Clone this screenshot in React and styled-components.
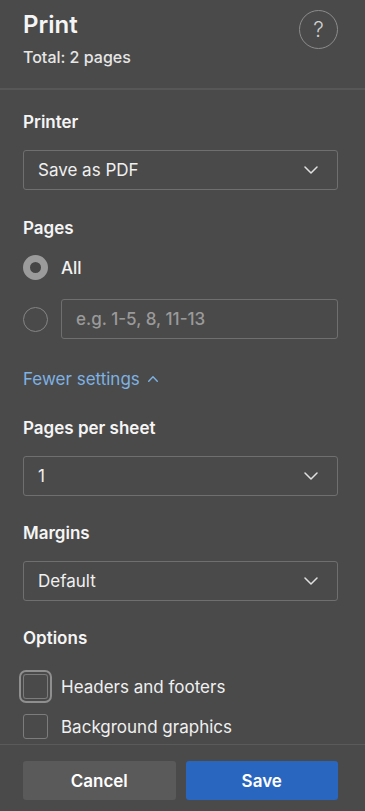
import React from 'react';
import styled, { createGlobalStyle } from 'styled-components';

const GlobalStyle = createGlobalStyle`
  html, body {
    margin: 0;
    padding: 0;
    background: #4a4a4a;
  }
  * {
    box-sizing: border-box;
  }
`;

const Panel = styled.div`
  display: flex;
  flex-direction: column;
  height: 811px;
  width: 365px;
  background: #4a4a4a;
  color: #f2f2f2;
  font-family: Inter, 'Noto Sans', 'Liberation Sans', sans-serif;
`;

const Header = styled.header`
  display: flex;
  justify-content: space-between;
  align-items: flex-start;
  height: 90px;
  padding: 9px 27px 0 23px;
  border-bottom: 2px solid #575757;
`;

const Title = styled.h1`
  margin: 0;
  font-size: 24px;
  line-height: 32px;
  font-weight: 600;
  color: #f5f5f5;
`;

const Subtitle = styled.div`
  margin-top: 6px;
  font-size: 16px;
  line-height: 20px;
  font-weight: 500;
  color: #e6e6e6;
`;

const HelpButton = styled.button`
  width: 39px;
  height: 39px;
  margin-top: 1px;
  border-radius: 50%;
  border: 1.5px solid #8c8c8c;
  background: transparent;
  color: #cfcfcf;
  font-family: inherit;
  font-size: 21px;
  font-weight: 300;
  display: flex;
  align-items: center;
  justify-content: center;
  padding: 0 0 1px;
`;

const Body = styled.main`
  flex: 1;
  padding: 22px 27px 0 23px;
  display: flex;
  flex-direction: column;
`;

const Section = styled.section`
  display: flex;
  flex-direction: column;
  margin-top: ${(p) => p.$top || 0}px;
`;

const Label = styled.div`
  font-size: 17px;
  line-height: 20px;
  font-weight: 600;
  color: #f5f5f5;
  margin-bottom: ${(p) => p.$gap || 18}px;
`;

const SelectBox = styled.div`
  display: flex;
  align-items: center;
  justify-content: space-between;
  height: 40px;
  padding: 0 19px 0 14px;
  border: 1.5px solid #6f6f6f;
  border-radius: 3px;
  font-size: 17px;
  color: #f0f0f0;
`;

const RadioRow = styled.div`
  display: flex;
  align-items: center;
  gap: 13px;
  margin-top: ${(p) => p.$top || 0}px;
  font-size: 17px;
  font-weight: 500;
`;

const Radio = styled.span`
  flex: none;
  width: 25px;
  height: 25px;
  border-radius: 50%;
  border: ${(p) => (p.$checked ? '7.5px solid #9b9b9b' : '1.5px solid #858585')};
  background: ${(p) => (p.$checked ? '#454545' : 'transparent')};
`;

const PageInput = styled.div`
  flex: 1;
  height: 40px;
  display: flex;
  align-items: center;
  padding: 0 14px;
  border: 1.5px solid #6f6f6f;
  border-radius: 3px;
  font-size: 17px;
  color: #9a9a9a;
`;

const MoreLink = styled.div`
  display: flex;
  align-items: center;
  gap: 8px;
  margin-top: 30px;
  font-size: 17px;
  line-height: 20px;
  color: #7fb1e3;
`;

const CheckRow = styled.div`
  display: flex;
  align-items: center;
  gap: 13px;
  height: 25px;
  margin-top: ${(p) => p.$top || 0}px;
  font-size: 17px;
  color: #f0f0f0;
`;

const Checkbox = styled.span`
  flex: none;
  width: 25px;
  height: 25px;
  border-radius: 3px;
  border: 1.5px solid #7c7c7c;
  box-shadow: ${(p) => (p.$focused ? '0 0 0 2px #4a4a4a, 0 0 0 4px #8f8f8f' : 'none')};
`;

const Footer = styled.footer`
  display: grid;
  grid-template-columns: 1fr 1fr;
  gap: 10px;
  padding: 16px 27px 11px 23px;
  border-top: 1.5px solid #5a5a5a;
`;

const Button = styled.button`
  height: 39px;
  border: none;
  border-radius: 3px;
  font-family: inherit;
  font-size: 17px;
  font-weight: 600;
  color: #fff;
  background: ${(p) => (p.$primary ? '#2866c0' : '#5a5a5a')};
`;

const Chevron = ({ up }) => (
  <svg width={up ? 10 : 14} height={up ? 6 : 8} viewBox="0 0 14 8" fill="none">
    <path
      d={up ? 'M1 7L7 1l6 6' : 'M1 1l6 6 6-6'}
      stroke={up ? '#7fb1e3' : '#e0e0e0'}
      strokeWidth={up ? 2 : 1.5}
      strokeLinecap="round"
      strokeLinejoin="round"
    />
  </svg>
);

function Select({ value }) {
  return (
    <SelectBox>
      <span>{value}</span>
      <Chevron />
    </SelectBox>
  );
}

export default function App() {
  return (
    <Panel>
      <GlobalStyle />
      <Header>
        <div>
          <Title>Print</Title>
          <Subtitle>Total: 2 pages</Subtitle>
        </div>
        <HelpButton>?</HelpButton>
      </Header>
      <Body>
        <Section>
          <Label>Printer</Label>
          <Select value="Save as PDF" />
        </Section>
        <Section $top={28}>
          <Label $gap={17}>Pages</Label>
          <RadioRow>
            <Radio $checked />
            <span>All</span>
          </RadioRow>
          <RadioRow $top={19}>
            <Radio />
            <PageInput>e.g. 1-5, 8, 11-13</PageInput>
          </RadioRow>
        </Section>
        <MoreLink>
          Fewer settings <Chevron up />
        </MoreLink>
        <Section $top={29}>
          <Label>Pages per sheet</Label>
          <Select value="1" />
        </Section>
        <Section $top={27}>
          <Label>Margins</Label>
          <Select value="Default" />
        </Section>
        <Section $top={27}>
          <Label $gap={26}>Options</Label>
          <CheckRow>
            <Checkbox $focused />
            <span>Headers and footers</span>
          </CheckRow>
          <CheckRow $top={15}>
            <Checkbox />
            <span>Background graphics</span>
          </CheckRow>
        </Section>
      </Body>
      <Footer>
        <Button>Cancel</Button>
        <Button $primary>Save</Button>
      </Footer>
    </Panel>
  );
}
